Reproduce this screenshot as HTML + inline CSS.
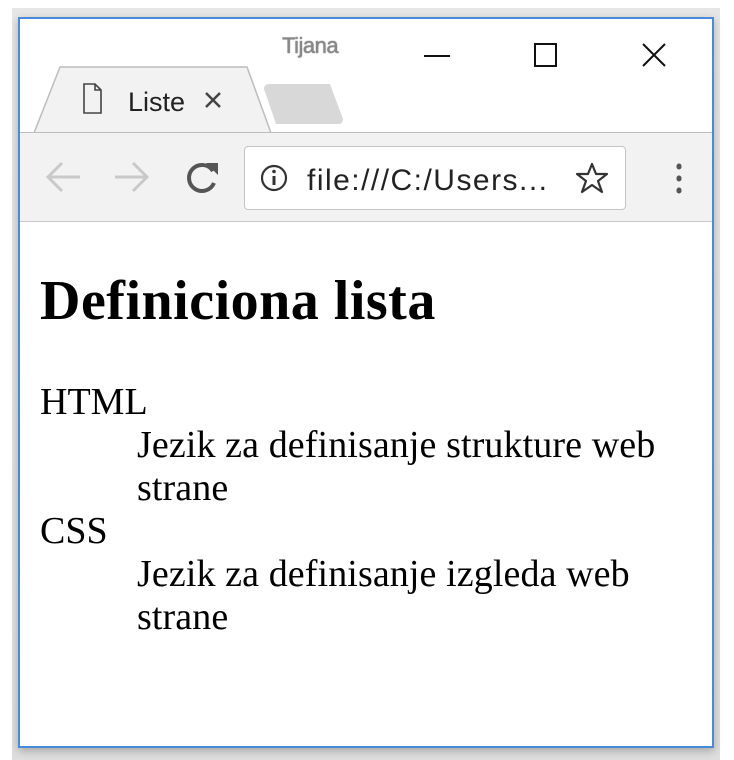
<!DOCTYPE html>
<html><head><style>
html,body{margin:0;padding:0;width:734px;height:760px;background:#fff;overflow:hidden;position:relative}
.shadow{position:absolute;left:12px;top:8px;width:708px;height:752px;background:linear-gradient(#e6e6e6,#dedede);}
.win{position:absolute;left:18px;top:17px;width:692px;height:727px;border:2px solid #4a8ad6;background:#fff;overflow:hidden;box-shadow:0 3px 8px rgba(0,0,0,.25)}
.title{position:absolute;left:262px;top:14px;font:22px "Liberation Sans",sans-serif;color:#888;letter-spacing:-0.5px;text-shadow:0 0 1px #333}
.toolbar{position:absolute;left:0;top:113px;width:692px;height:88px;background:#f2f2f2;border-top:1px solid #bdbdbd;border-bottom:1px solid #c8c8c8}
.url{position:absolute;left:224px;top:13px;width:380px;height:62px;background:#fff;border:1px solid #c4c4c4;border-radius:4px}
.content{position:absolute;left:20px;top:250px;font-family:"Liberation Serif",serif;color:#000}
h1{margin:0;font-size:56px;line-height:64px;font-weight:bold;letter-spacing:0.5px}
.t{font-size:38px;line-height:43px}
dd{margin:0 0 0 97px;font-size:38px;line-height:43px;width:540px;letter-spacing:0.1px}
</style></head><body>
<div class="shadow"></div>
<div class="win">
<div class="title">Tijana</div>
<svg width="692" height="200" style="position:absolute;left:0;top:0">
<line x1="404" y1="37" x2="430" y2="37" stroke="#111" stroke-width="2"/>
<rect x="515" y="25" width="21" height="22" fill="none" stroke="#111" stroke-width="2"/>
<path d="M623 25 L645 47 M645 25 L623 47" stroke="#111" stroke-width="2"/>
<path d="M14 114 L40 48 L227 48 L251 114 Z" fill="#f2f2f2" stroke="#bdbdbd" stroke-width="1.5"/>
<path d="M244 70 Q244 65 250 65 L310 65 L323 100 Q323 105 318 105 L256 105 Z" fill="#d8d8d8"/>
<path d="M64 65 L75 65 L81 71 L81 94 L64 94 Z M75 65 L75 71 L81 71" fill="none" stroke="#444" stroke-width="1.6"/>
<text x="108" y="92" font-family="Liberation Sans,sans-serif" font-size="27" fill="#222" textLength="57">Liste</text>
<path d="M186 74 L200 88 M200 74 L186 88" stroke="#444" stroke-width="2.5"/>
</svg>
<div class="toolbar">
<svg width="692" height="88" style="position:absolute;left:0;top:0">
<path d="M28 44 L60 44 M42 30 L28 44 L42 58" fill="none" stroke="#c9c9c9" stroke-width="3"/>
<path d="M95 44 L127 44 M113 30 L127 44 L113 58" fill="none" stroke="#c9c9c9" stroke-width="3"/>
<path d="M193 38 A13 13 0 1 0 194 50" fill="none" stroke="#555" stroke-width="4"/>
<path d="M186 30 L198 30 L198 42 Z" fill="#555"/>
<path d="M659 33 v1 M659 45 v1 M659 57 v1" stroke="#555" stroke-width="5" stroke-linecap="round"/>
</svg>
<div class="url">
<svg width="380" height="62" style="position:absolute;left:0;top:0">
<circle cx="29" cy="31" r="12" fill="none" stroke="#333" stroke-width="2.2"/>
<path d="M29 29 v9" stroke="#333" stroke-width="3"/><circle cx="29" cy="24.5" r="1.8" fill="#333"/>
<text x="62" y="43" font-family="Liberation Sans,sans-serif" font-size="30" fill="#222" textLength="240">file:///C:/Users...</text>
<path d="M347 17 L351 27 L362 27 L353 34 L357 45 L347 38 L337 45 L341 34 L332 27 L343 27 Z" fill="none" stroke="#333" stroke-width="2.2" stroke-linejoin="round"/>
</svg>
</div>
</div>
<div class="content">
<h1>Definiciona lista</h1>
<dl style="margin:48px 0 0 0">
<dt class="t">HTML</dt><dd>Jezik za definisanje strukture web strane</dd>
<dt class="t">CSS</dt><dd>Jezik za definisanje izgleda web strane</dd>
</dl>
</div>
</div>
</body></html>
